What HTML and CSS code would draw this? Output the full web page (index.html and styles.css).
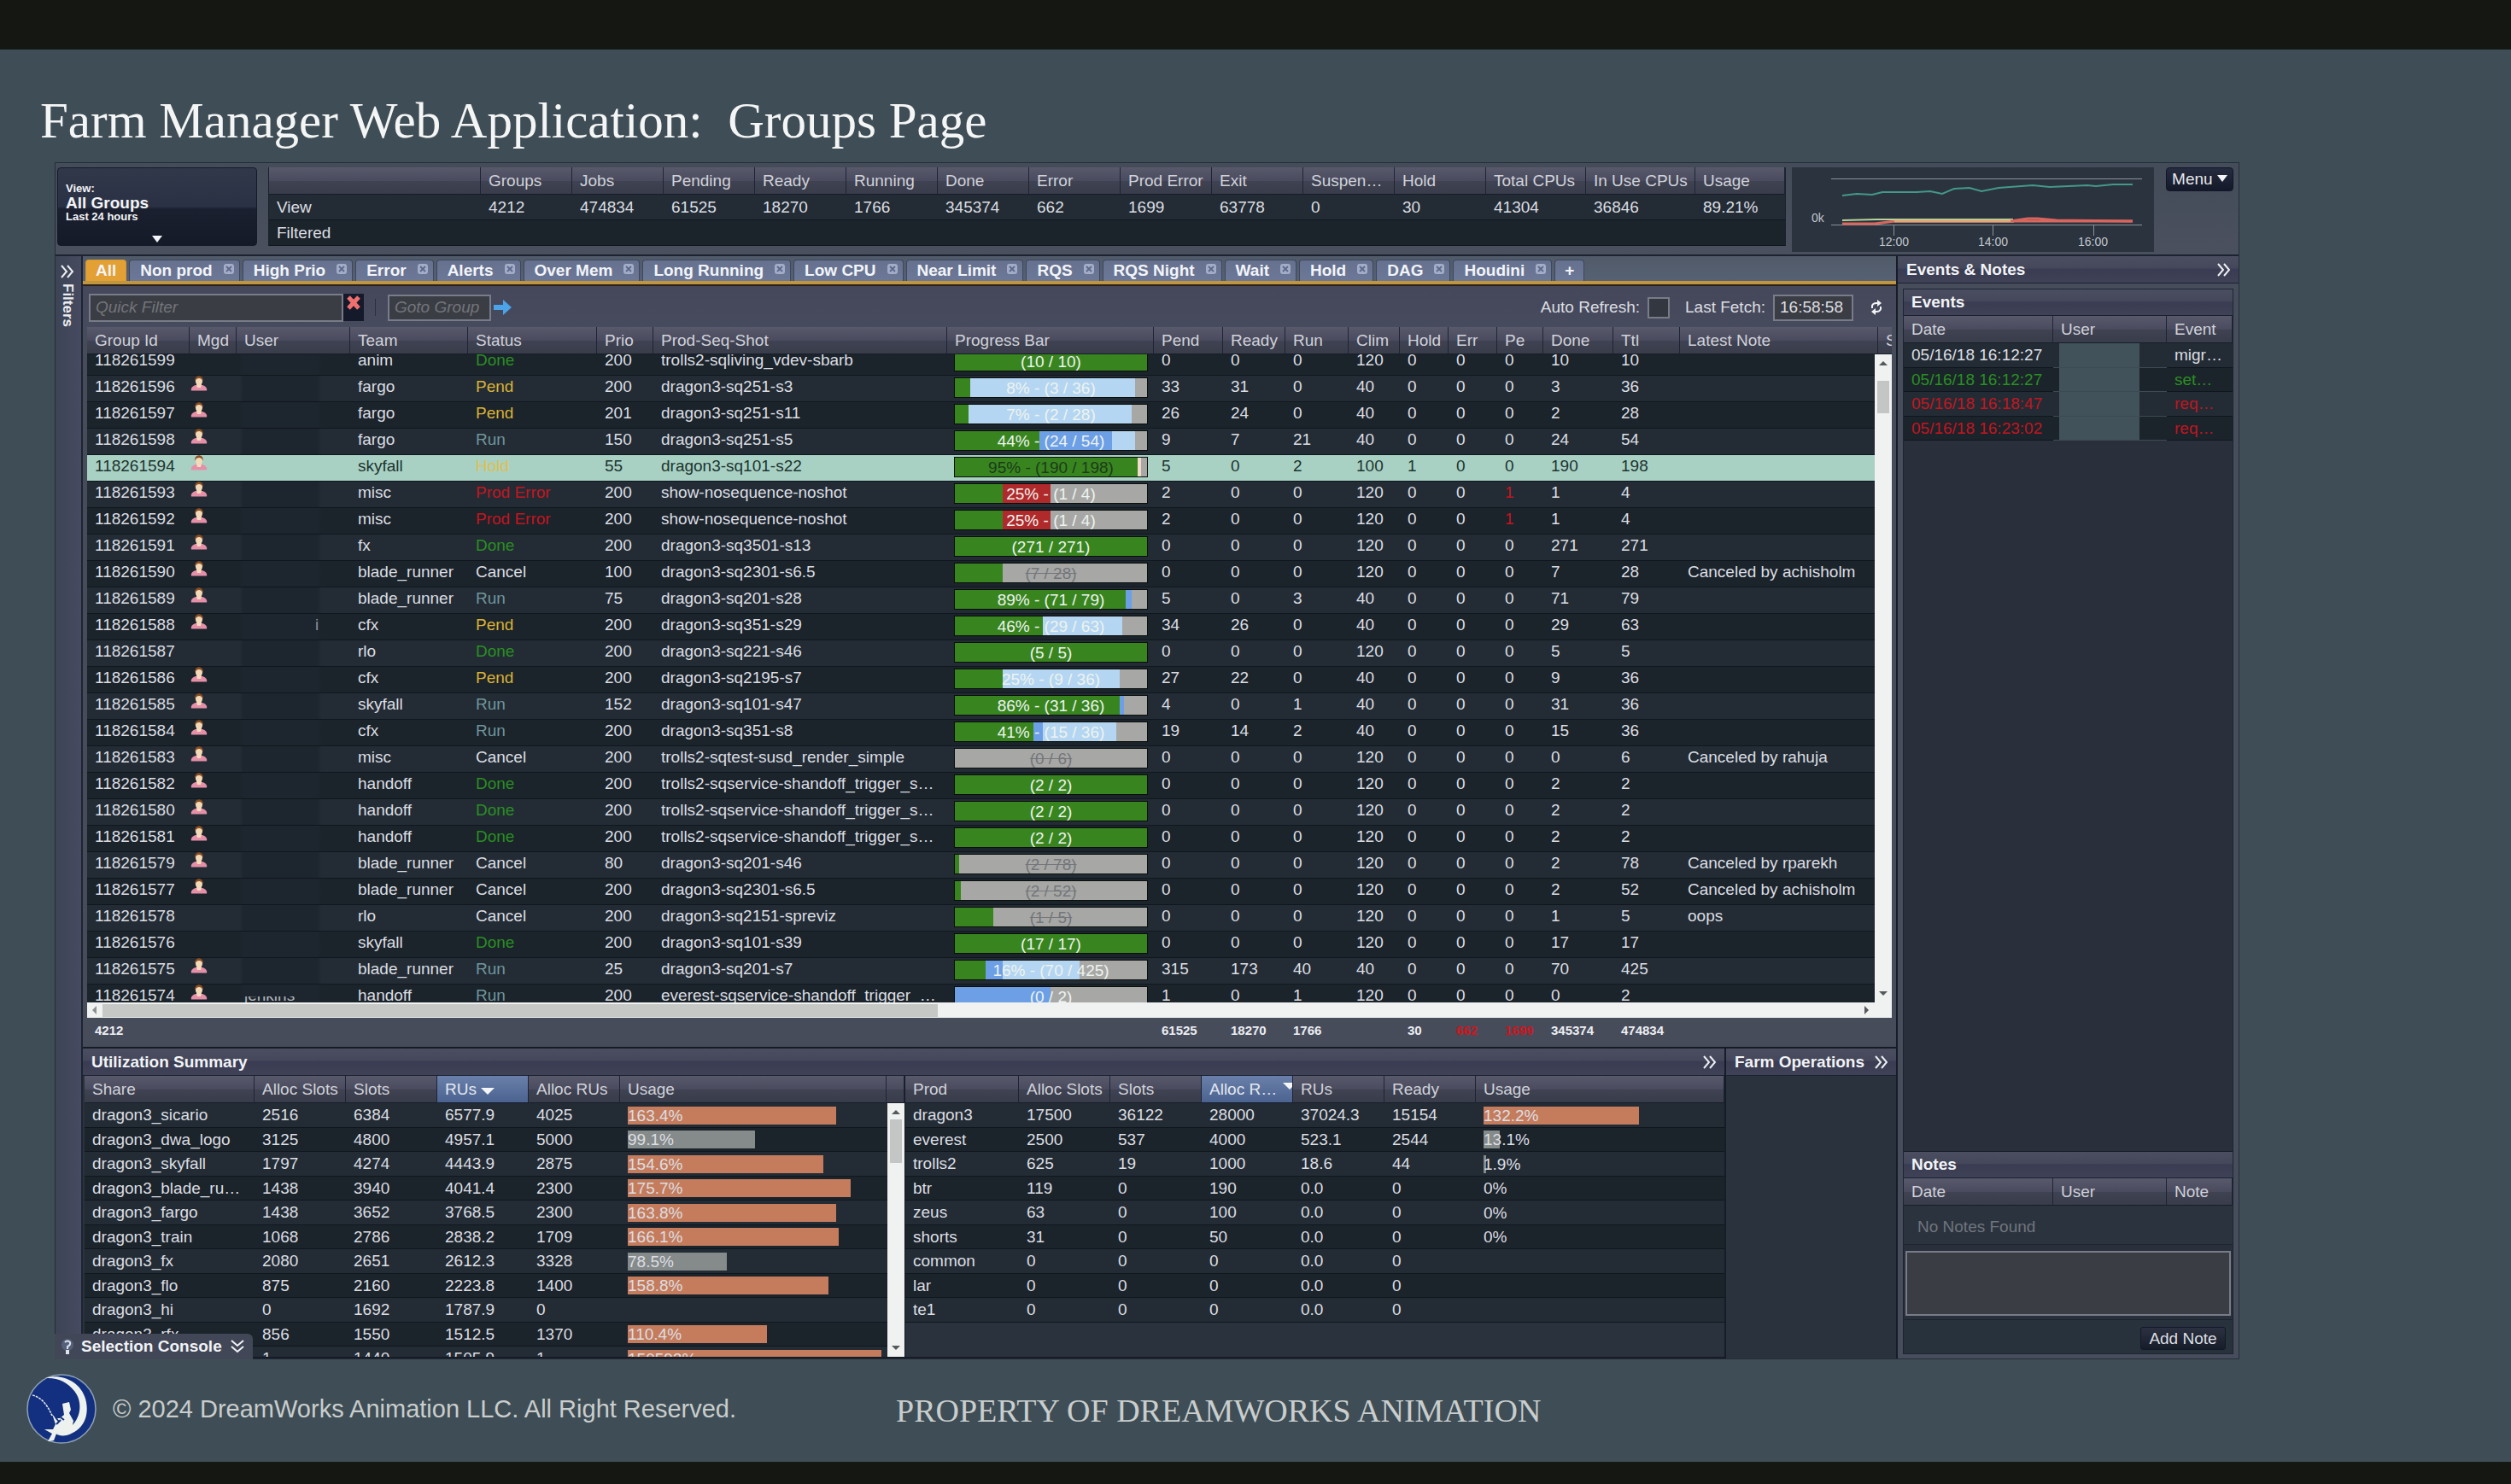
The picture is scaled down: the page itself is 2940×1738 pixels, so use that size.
FILE: index.html
```html
<!DOCTYPE html>
<html lang="en">
<head>
<meta charset="utf-8">
<title>Farm Manager - Groups</title>
<link rel="stylesheet" href="styles.css">
</head>
<body>
<svg class="defs" aria-hidden="true">
  <symbol id="chevrons" viewBox="0 0 18 16"><path d="M2 1l6 7-6 7M9 1l6 7-6 7" fill="none" stroke="currentColor" stroke-width="2"/></symbol>
  <symbol id="close" viewBox="0 0 14 14"><rect x="1" y="1" width="12" height="12" rx="3" fill="#a3adc8"/><path d="M4 4l6 6M10 4l-6 6" stroke="#5d6a8c" stroke-width="2"/></symbol>
  <symbol id="person" viewBox="0 0 20 18"><path d="M1 17.500c-1-3 1.500-5.500 5-6.500h8c3.500 1 6 3.500 5 6.500z" fill="#e58fa8"/><path d="M7 10h6l-1 4h-4z" fill="#f6dcc0"/><ellipse cx="10" cy="6.500" rx="4" ry="5" fill="#f3d9b8"/><path d="M5 7c-.5-9 10.500-9 10 0-1-3-3-4-5-4s-4 1-5 4z" fill="#8a4f22"/></symbol>
</svg>
<main class="slide">
  <h1 class="slide-title">Farm Manager Web Application:&nbsp; Groups Page</h1>

  <section class="app">
    <header class="top">
      <button class="view-select" type="button">
        <span class="view-label">View:</span>
        <span class="view-name">All Groups</span>
        <span class="view-range">Last 24 hours</span>
        <span class="caret"></span>
      </button>
      <div class="summary">
        <table class="table">
          <colgroup><col class="w248"><col class="w107" span="11"><col class="w117"><col class="w128"><col></colgroup>
          <thead><tr><th></th><th>Groups</th><th>Jobs</th><th>Pending</th><th>Ready</th><th>Running</th><th>Done</th><th>Error</th><th>Prod Error</th><th>Exit</th><th>Suspen…</th><th>Hold</th><th>Total CPUs</th><th>In Use CPUs</th><th>Usage</th></tr></thead>
          <tbody>
            <tr><td>View</td><td>4212</td><td>474834</td><td>61525</td><td>18270</td><td>1766</td><td>345374</td><td>662</td><td>1699</td><td>63778</td><td>0</td><td>30</td><td>41304</td><td>36846</td><td>89.21%</td></tr>
            <tr><td>Filtered</td><td></td><td></td><td></td><td></td><td></td><td></td><td></td><td></td><td></td><td></td><td></td><td></td><td></td><td></td></tr>
          </tbody>
        </table>
      </div>
      <svg class="chart" viewBox="0 0 424 99" role="img" aria-label="Farm load">
        <path d="M46 13.500H410M46 67.500H410M119.500 68v12M235.500 68v12M353.500 68v12" stroke="#8b919a" fill="none"/>
        <path d="M59 33l17-2 18 1 12-3h40l16-1 14 3 14-6 18-1 14 4 20-4 40-3 20 2 44-2 10 1 20-2h23" stroke="#45988b" stroke-width="2" fill="none"/>
        <path d="M59 66h38l24-3h278" stroke="#d9695f" stroke-width="3" fill="none"/>
        <path d="M59 62l40-1h160" stroke="#b7d59a" stroke-width="2" fill="none"/>
        <path d="M120 63h140" stroke="#e0a878" stroke-width="3" fill="none"/>
        <path d="M256 63l20-3h12l22 2 89 1" stroke="#d9655f" stroke-width="3" fill="none"/>
        <text x="23" y="64">0k</text><text x="102" y="92">12:00</text><text x="218" y="92">14:00</text><text x="335" y="92">16:00</text>
      </svg>
      <button class="menu-btn" type="button">Menu <span class="caret"></span></button>
    </header>

    <div class="middle">
      <aside class="filters">
        <button class="icon-btn" type="button" aria-label="Expand filters"><svg class="chev"><use href="#chevrons"/></svg></button>
        <span class="filters-label">Filters</span>
      </aside>

      <div class="center">
        <nav class="tabs" id="tabs"></nav>

        <div class="toolbar">
          <input class="field quick" type="text" placeholder="Quick Filter" aria-label="Quick Filter">
          <button class="clear-btn" type="button" aria-label="Clear filter"><svg viewBox="0 0 18 18"><path d="M3 2l12 13M15 2L3 15" stroke="#f07070" stroke-width="5"/></svg></button>
          <span class="rule"></span>
          <input class="field goto" type="text" placeholder="Goto Group" aria-label="Goto Group">
          <button class="icon-btn go" type="button" aria-label="Go"><svg viewBox="0 0 21 18"><path d="M0 6h11V0l10 9-10 9v-6H0z" fill="#4ba3e8"/></svg></button>
          <label class="auto" for="auto">Auto Refresh:</label>
          <input class="check" id="auto" type="checkbox">
          <label class="fetch-label" for="fetch">Last Fetch:</label>
          <input class="field fetch" id="fetch" type="text" value="16:58:58" readonly>
          <button class="icon-btn refresh" type="button" aria-label="Refresh"><svg viewBox="0 0 14 18"><path d="M2 10V7q1-3 5-3h3M12 8v3q-1 3-5 3H4" fill="none" stroke="#f2f3f5" stroke-width="2"/><path d="M8 0l5 4-5 4zM6 10l-5 4 5 4z" fill="#f2f3f5"/></svg></button>
        </div>

        <div class="grid-wrap">
          <table class="table groups">
            <colgroup class="grid-cols"></colgroup>
            <thead><tr><th>Group Id</th><th>Mgd</th><th>User</th><th>Team</th><th>Status</th><th>Prio</th><th>Prod-Seq-Shot</th><th>Progress Bar</th><th>Pend</th><th>Ready</th><th>Run</th><th>Clim</th><th>Hold</th><th>Err</th><th>Pe</th><th>Done</th><th>Ttl</th><th>Latest Note</th><th class="cut">S</th></tr></thead>
          </table>
          <div class="scroll-row">
            <div class="viewport">
              <table class="table groups body"><colgroup class="grid-cols"></colgroup><tbody id="groups"></tbody></table>
            </div>
            <div class="vbar"><span class="up"></span><span class="thumb"></span><span class="down"></span></div>
          </div>
          <div class="hbar"><span class="left"></span><span class="thumb"></span><span class="right"></span></div>
          <table class="table groups totals">
            <colgroup class="grid-cols"></colgroup>
            <tbody><tr><td>4212</td><td></td><td></td><td></td><td></td><td></td><td></td><td></td><td>61525</td><td>18270</td><td>1766</td><td></td><td>30</td><td class="bad">662</td><td class="bad">1699</td><td>345374</td><td>474834</td><td></td><td></td></tr></tbody>
          </table>
        </div>

        <div class="bottom">
          <section class="util">
            <h2 class="panel-title">Utilization Summary <button class="icon-btn" type="button" aria-label="Collapse"><svg class="chev"><use href="#chevrons"/></svg></button></h2>
            <div class="util-tables">
              <div class="shares">
                <table class="table small">
                  <colgroup><col class="w199"><col class="w107" span="4"><col><col class="w21"></colgroup>
                  <thead><tr><th>Share</th><th>Alloc Slots</th><th>Slots</th><th class="sorted">RUs <span class="caret"></span></th><th>Alloc RUs</th><th>Usage</th><th></th></tr></thead>
                </table>
                <div class="scroll-row">
                  <div class="viewport">
                    <table class="table small"><colgroup><col class="w199"><col class="w107" span="4"><col></colgroup><tbody id="shares"></tbody></table>
                  </div>
                  <div class="vbar short"><span class="up"></span><span class="thumb"></span><span class="down"></span></div>
                </div>
              </div>
              <div class="prods">
                <table class="table small">
                  <colgroup><col class="w133"><col class="w107" span="5"><col></colgroup>
                  <thead><tr><th>Prod</th><th>Alloc Slots</th><th>Slots</th><th class="sorted cut-sort"><div class="sort-cell"><span>Alloc R…</span><span class="caret"></span></div></th><th>RUs</th><th>Ready</th><th>Usage</th></tr></thead>
                  <tbody id="prods"></tbody>
                </table>
              </div>
            </div>
          </section>
          <section class="ops">
            <h2 class="panel-title">Farm Operations <button class="icon-btn" type="button" aria-label="Collapse"><svg class="chev"><use href="#chevrons"/></svg></button></h2>
          </section>
        </div>
      </div>

      <aside class="side">
        <h2 class="panel-title">Events &amp; Notes <button class="icon-btn" type="button" aria-label="Collapse"><svg class="chev"><use href="#chevrons"/></svg></button></h2>
        <div class="side-body">
          <section class="events">
            <h3 class="panel-title">Events</h3>
            <table class="table small">
              <colgroup><col class="w175"><col class="w133"><col></colgroup>
              <thead><tr><th>Date</th><th>User</th><th>Event</th></tr></thead>
              <tbody>
                <tr><td>05/16/18 16:12:27</td><td class="masked"></td><td>migr…</td></tr>
                <tr class="good"><td>05/16/18 16:12:27</td><td class="masked"></td><td>set…</td></tr>
                <tr class="bad"><td>05/16/18 16:18:47</td><td class="masked"></td><td>req…</td></tr>
                <tr class="bad"><td>05/16/18 16:23:02</td><td class="masked"></td><td>req…</td></tr>
              </tbody>
            </table>
          </section>
          <section class="notes">
            <h3 class="panel-title">Notes</h3>
            <table class="table small">
              <colgroup><col class="w175"><col class="w133"><col></colgroup>
              <thead><tr><th>Date</th><th>User</th><th>Note</th></tr></thead>
            </table>
            <p class="empty">No Notes Found</p>
            <textarea class="field note-text" aria-label="Note text"></textarea>
            <div class="note-actions"><button class="add-note" type="button">Add Note</button></div>
          </section>
        </div>
      </aside>
    </div>

    <button class="console" type="button">
      <svg class="console-icon" viewBox="0 0 16 18"><circle cx="9" cy="7" r="7" fill="#55607c"/><path d="M6 4q3-3 6 0 1 3-3 5v3M8 14h2v3H8z" fill="none" stroke="#dfe3ec" stroke-width="2"/></svg>
      Selection Console
      <svg class="chev turned"><use href="#chevrons"/></svg>
    </button>
  </section>

  <footer class="slide-foot">
    <svg class="logo" viewBox="0 0 84 84" role="img" aria-label="DreamWorks">
      <circle cx="42" cy="42" r="40" fill="#12307f" stroke="#8fa0b4" stroke-width="1.500"/>
      <path d="M23 6C42 0 64 10 70 30c6 22-4 38-22 43-6 1-10 0-15-3 9 1 16-2 21-8 12-12 12-30 3-41C49 11 38 5 23 6z" fill="#eef2ee"/>
      <path d="M8 26q14 3 23 24" fill="none" stroke="#e6ebf0" stroke-width="1.500" stroke-dasharray="3 1"/>
      <path d="M43 36l8-2 2 9-2 4 5 9-2 10-11 4-7 1-3 8-7 1 5-9-9-5 10 0 3-6-4-12 4 5 5 0 5-4z" fill="#eef2ee"/>
      <path d="M35 52l4 5M41 52l4 3M36 60l5-5" stroke="#12307f" stroke-width="2"/>
    </svg>
    <p class="copyright">© 2024 DreamWorks Animation LLC. All Right Reserved.</p>
    <p class="property">PROPERTY OF DREAMWORKS ANIMATION</p>
  </footer>
</main>
<script src="app.js"></script>
</body>
</html>
```
FILE: styles.css
```css
* { box-sizing: border-box; }

body {
  margin: 0;
  background: #40505a;
  color: #dcdee2;
  font: 19px/26px "Liberation Sans", Arial, sans-serif;
}

h1, h2, h3, p { margin: 0; }

button, input, textarea { font: inherit; color: inherit; }
button { padding: 0; border: 0; background: none; }

.defs { position: absolute; width: 0; height: 0; }

.slide {
  display: flex;
  flex-direction: column;
  height: 100vh;
  border-top: 58px solid #151812;
  border-bottom: 26px solid #151812;
  background: #3f4e56;
}

.slide-title {
  padding: 50px 0 16px 47px;
  color: #f4f5f5;
  font: 59px/66px "Liberation Serif", "Times New Roman", serif;
}

/* application frame */
.app {
  position: relative;
  flex: 1;
  display: flex;
  flex-direction: column;
  min-height: 0;
  margin: 0 318px 0 64px;
  border: 1px solid #232c39;
  background: #474d5b;
}

.top {
  display: flex;
  align-items: flex-start;
  height: 109px;
  padding: 5px 6px 0 2px;
  border-bottom: 2px solid #1d2431;
  background: linear-gradient(#434c58, #4b505e);
}

.view-select {
  display: flex;
  flex-direction: column;
  align-items: flex-start;
  width: 234px;
  height: 92px;
  margin-right: 13px;
  padding: 16px 9px 4px;
  border: 1px solid #141a2a;
  border-radius: 4px;
  background: linear-gradient(#31384a, #2b3144 50%, #1a202f 53%, #151a28);
  color: #f4f5f7;
  font-weight: bold;
  text-align: left;
}
.view-label, .view-range { font-size: 13px; line-height: 16px; }
.view-name { font-size: 19px; line-height: 17px; }
.view-select .caret { align-self: center; margin-top: 14px; }

.caret {
  display: inline-block;
  border: 6px solid transparent;
  border-top: 8px solid #f4f5f7;
  border-bottom: 0;
}

/* data tables */
.table {
  width: 100%;
  table-layout: fixed;
  border-spacing: 0;
}
.table th, .table td {
  padding: 0 5px 0 9px;
  overflow: hidden;
  text-align: left;
  text-overflow: ellipsis;
  white-space: nowrap;
}
.table th {
  height: 32px;
  border-right: 1px solid #1e2436;
  border-bottom: 1px solid #171d2b;
  background: linear-gradient(#585a6c, #4a4b5e 50%, #3f4252 52%, #393d4a);
  color: #d0d2da;
  font-weight: normal;
}
.table td { border-bottom: 1px solid #10161e; }
.table tbody tr { background: #232c35; }
.table tbody tr:nth-child(even) { background: #1b232b; }
.table .cut { padding-right: 0; border-right: 0; text-overflow: clip; }
.table .sorted { background: linear-gradient(#6a80aa, #4b6390); color: #e3e7ef; }
.table .sorted .caret { border-width: 8px 8px 0; }
.table .cut-sort { padding-right: 0; }
.sort-cell { display: flex; justify-content: space-between; }
.table .sort-cell .caret { flex: none; margin: 5px -5px 0 0; }

.w21 { width: 21px; }
.w107 { width: 107px; }
.w117 { width: 117px; }
.w128 { width: 128px; }
.w133 { width: 133px; }
.w175 { width: 175px; }
.w199 { width: 199px; }
.w248 { width: 248px; }

.summary { flex: 1; min-width: 0; margin-right: 7px; border: 1px solid #1b2130; border-width: 0 1px; }
.summary .table td { height: 30px; }

.chart { width: 424px; height: 99px; margin-right: 14px; background: #2a333e; }
.chart text { fill: #c3c7cd; font-size: 14px; }

.menu-btn {
  width: 79px;
  height: 28px;
  border: 1px solid #10162a;
  border-radius: 4px;
  background: linear-gradient(#262c3f, #141929);
  color: #e6e8ec;
}
.menu-btn .caret { vertical-align: 3px; }

/* body of the frame */
.middle { flex: 1; display: flex; min-height: 0; }

.icon-btn { display: flex; align-items: center; color: #eceef2; }
.chev { display: block; width: 18px; height: 16px; }
.chev.turned { transform: rotate(90deg); }

.filters {
  display: flex;
  flex-direction: column;
  align-items: center;
  gap: 6px;
  width: 32px;
  padding: 10px 2px 0 0;
  border-right: 2px solid #1d2432;
  background: linear-gradient(90deg, #3c4455, #474a60);
}
.filters-label { writing-mode: vertical-rl; color: #eceef2; font-size: 17px; font-weight: bold; line-height: 18px; }

.center { flex: 1; display: flex; flex-direction: column; min-width: 0; border-right: 2px solid #161c28; }

.tabs {
  display: flex;
  gap: 3px;
  padding: 4px 3px 0;
  border-bottom: 4px solid #c0953f;
  background: linear-gradient(#505a68, #566174);
}
.tab {
  display: flex;
  align-items: center;
  gap: 12px;
  height: 25px;
  padding: 0 5px 0 12px;
  border: 1px solid #3d475e;
  border-bottom: 0;
  border-radius: 4px 4px 0 0;
  background: linear-gradient(#66718f, #6c7897);
  color: #f2f4f8;
  font-weight: bold;
}
.tab svg { width: 14px; height: 14px; margin-bottom: 4px; }
.tab.plain { padding: 0 11px; }
.tab.active { border-color: #d8962c; background: #e3a035; }

.toolbar {
  display: flex;
  align-items: center;
  height: 50px;
  padding: 2px 10px 0 7px;
  border-top: 2px solid #2b2118;
  background: linear-gradient(#45475a, #474b5e);
}
.field {
  border: 2px solid #777c88;
  border-radius: 0;
  background: #3b3d44;
  outline: 0;
}
.field::placeholder { color: #72757a; font-style: italic; opacity: 1; }
.quick { width: 298px; height: 33px; padding: 0 6px; }
.clear-btn { width: 24px; height: 32px; background: #151a2a; }
.clear-btn svg { display: block; width: 18px; height: 18px; margin: 0 3px 10px; }
.rule { width: 1px; height: 20px; margin: 0 14px 0 13px; background: #2a3042; }
.goto { width: 121px; height: 31px; padding: 0 6px; }
.go { width: 21px; height: 18px; margin-left: 3px; }
.auto { margin-left: auto; }
.check { appearance: none; width: 26px; height: 25px; margin: 0 18px 0 9px; border: 2px solid #777c88; background: #33373f; }
.fetch-label { margin-right: 9px; }
.fetch { width: 94px; height: 31px; padding: 0 6px; }
.refresh { width: 14px; height: 18px; margin: 0 6px 0 20px; }

/* groups grid */
.grid-wrap { flex: 1; display: flex; flex-direction: column; min-height: 0; padding: 0 5px; background: #474c5b; }
.groups { flex: none; }
.groups td { height: 31px; padding-bottom: 4px; }
.groups td.icon { padding: 0 0 0 1px; vertical-align: top; }
.groups td.icon svg { display: block; width: 20px; height: 18px; }
.groups td.user { padding: 0 5px 4px 9px; background: linear-gradient(90deg, transparent 4px, #1d252e 8px, #1d252e 94px, transparent 100px); }
.groups td.bar { padding: 0 7px 2px 8px; }
.body { margin-top: -6px; }
.body tbody tr:nth-child(odd) { background: #1b232b; }
.body tbody tr:nth-child(even) { background: #232c35; }
.body tbody tr.selected { background: #a8d1c4; color: #20342f; }
.body tbody tr.selected td.user { background: none; }
.body tbody tr.selected .progress { color: #1d3b1b; }
.residue { display: block; clip-path: inset(14px 0 0); color: #b4b8bd; }
.stray { display: block; padding-left: 83px; color: #8d9298; }

.scroll-row { flex: 1; display: flex; min-height: 0; overflow: hidden; }
.viewport { flex: 1; min-width: 0; overflow: hidden; }
.grid-wrap .viewport .groups { width: calc(100% + 20px); }

.Done, .good { color: #2a8f22; }
.Pend { color: #d9b236; }
.Run { color: #6f969c; }
.Hold { color: #e0bf50; }
.Error, .bad { color: #c3151f; }

.progress {
  height: 24px;
  border: 1px solid #0a0f0a;
  color: #eef3ee;
  line-height: 23px;
  text-align: center;
}
.progress.cancel { color: #74767a; text-decoration: line-through; }

.vbar, .hbar { background: #f0f2f1; }
.vbar { display: flex; flex-direction: column; align-items: center; width: 20px; padding: 8px 0; }
.vbar .thumb { width: 14px; height: 38px; margin-top: 18px; background: #c4c6c6; }
.vbar.short .thumb { height: 51px; margin-top: 6px; }
.hbar { display: flex; align-items: center; flex: none; height: 18px; padding: 0 27px 0 6px; }
.hbar .thumb { width: 47%; height: 15px; margin-left: 7px; background: #c6c8c6; }
.up, .down, .left, .right { border: 5px solid transparent; }
.up { border-top: 0; border-bottom-color: #55595c; }
.down { border-bottom: 0; border-top-color: #55595c; margin-top: auto; }
.left { border-left: 0; border-right-color: #8c9092; }
.right { border-right: 0; border-left-color: #55595c; margin-left: auto; }

.groups.totals { font-size: 15px; font-weight: bold; }
.groups.totals tr { background: none; }
.groups.totals td { height: 34px; padding-right: 0; border: 0; color: #eceef2; overflow: visible; }
.groups.totals td.bad { color: #d0141c; }

/* lower panels */
.bottom { display: flex; flex: none; height: 365px; border-top: 2px solid #161c26; background: #2a333d; }
.panel-title {
  display: flex;
  align-items: center;
  justify-content: space-between;
  flex: none;
  height: 32px;
  padding: 0 8px 0 10px;
  border-bottom: 1px solid #1a2030;
  background: linear-gradient(#4b4e60, #45485b 45%, #393c52 50%, #404357);
  color: #f2f3f6;
  font-size: 19px;
  font-weight: bold;
}
.util { flex: 1; display: flex; flex-direction: column; min-width: 0; border-right: 2px solid #161c28; }
.ops { width: 199px; }
.util-tables { flex: 1; display: flex; min-height: 0; padding-left: 2px; border-bottom: 2px solid #161c26; }
.shares { display: flex; flex-direction: column; width: 50%; }
.prods { flex: 1; min-width: 0; border-left: 1px solid #141a24; }
.small td { height: 28px; }
.small tbody tr:nth-child(odd) td { height: 29px; }
.small td.usage { padding-right: 7px; }
#shares td:first-child { padding-right: 12px; }
.meter { display: block; height: 21px; background: #858a8a; line-height: 21px; }
.meter.over { background: #c47c5c; }

/* events and notes */
.side { display: flex; flex-direction: column; width: 399px; }
.side-body { flex: 1; display: flex; flex-direction: column; margin: 6px 6px 5px; border: 1px solid #1c2432; background: #2a303b; }
.events { flex: 1; }
.side-body .panel-title { height: 31px; padding-left: 9px; }
.table td.masked { background: linear-gradient(#42525a, #42525a) 7px 0 / 94px 100% no-repeat; border-bottom-color: #3c4a53; }
.notes { border-top: 1px solid #161c28; }
.notes .empty { height: 46px; padding: 12px 0 0 16px; border-bottom: 1px solid #1e2632; color: #70757d; background: #2b343e; }
.note-text { display: block; width: calc(100% - 4px); height: 76px; margin: 7px 2px 4px; resize: none; }
.note-actions { display: flex; justify-content: flex-end; padding: 8px 8px 4px; border-top: 1px solid #1c2430; background: #28323c; }
.add-note {
  width: 100px;
  height: 27px;
  border: 1px solid #12182a;
  border-radius: 3px;
  background: linear-gradient(#2b3140, #161c28);
}

.console {
  position: absolute;
  left: -1px;
  bottom: -1px;
  display: flex;
  align-items: center;
  gap: 9px;
  height: 30px;
  padding: 0 9px 0 6px;
  border-radius: 0 6px 0 0;
  background: #414756;
  color: #f2f3f6;
  font-weight: bold;
}
.console-icon { width: 16px; height: 18px; }

/* slide footer */
.slide-foot { display: flex; align-items: center; flex: none; height: 120px; padding-left: 30px; color: #c9cdcd; }
.logo { width: 84px; height: 84px; margin: 0 18px 4px 0; }
.copyright { width: 917px; margin-bottom: 4px; font-size: 29px; line-height: 32px; }
.property { font: 38px/44px "Liberation Serif", "Times New Roman", serif; }
```
FILE: app.js
```js
const columnWidths = [120, 55, 133, 138, 151, 66, 344, 242, 81, 73, 74, 60, 57, 57, 54, 82, 78, 0, 16];
document.querySelectorAll('.grid-cols').forEach(group => {
  group.innerHTML = columnWidths.map(w => w ? `<col style="width:${w}px">` : '<col>').join('');
});

const tabs = ['Non prod', 'High Prio', 'Error', 'Alerts', 'Over Mem', 'Long Running', 'Low CPU', 'Near Limit', 'RQS', 'RQS Night', 'Wait', 'Hold', 'DAG', 'Houdini'];
document.getElementById('tabs').innerHTML =
  '<button class="tab plain active" type="button">All</button>' +
  tabs.map(t => `<button class="tab" type="button">${t}<svg><use href="#close"/></svg></button>`).join('') +
  '<button class="tab plain" type="button">+</button>';

const colors = { g: '#38851f', b: '#6c9fe6', l: '#b4d6f2', r: '#b02a2c', h: '#f0dcc8', x: '#a7a8a6' };

// id | managed | team | status | prio | shot | segments (colour + end %) | label | pend ready run clim hold err pe done ttl | note
const groups = `118261599|0|anim|Done|200|trolls2-sqliving_vdev-sbarb|g100|(10 / 10)|0 0 0 120 0 0 0 10 10|
118261596|1|fargo|Pend|200|dragon3-sq251-s3|g8 l94|8% - (3 / 36)|33 31 0 40 0 0 0 3 36|
118261597|1|fargo|Pend|201|dragon3-sq251-s11|g7 l92|7% - (2 / 28)|26 24 0 40 0 0 0 2 28|
118261598|1|fargo|Run|150|dragon3-sq251-s5|g44 b82 l94|44% - (24 / 54)|9 7 21 40 0 0 0 24 54|
118261594|1|skyfall|Hold|55|dragon3-sq101-s22|g95 h97|95% - (190 / 198)|5 0 2 100 1 0 0 190 198|
118261593|1|misc|Prod Error|200|show-nosequence-noshot|g25 r50|25% - (1 / 4)|2 0 0 120 0 0 1 1 4|
118261592|1|misc|Prod Error|200|show-nosequence-noshot|g25 r50|25% - (1 / 4)|2 0 0 120 0 0 1 1 4|
118261591|1|fx|Done|200|dragon3-sq3501-s13|g100|(271 / 271)|0 0 0 120 0 0 0 271 271|
118261590|1|blade_runner|Cancel|100|dragon3-sq2301-s6.5|g25|(7 / 28)|0 0 0 120 0 0 0 7 28|Canceled by achisholm
118261589|1|blade_runner|Run|75|dragon3-sq201-s28|g89 b92|89% - (71 / 79)|5 0 3 40 0 0 0 71 79|
118261588|1|cfx|Pend|200|dragon3-sq351-s29|g46 l87|46% - (29 / 63)|34 26 0 40 0 0 0 29 63|
118261587|0|rlo|Done|200|dragon3-sq221-s46|g100|(5 / 5)|0 0 0 120 0 0 0 5 5|
118261586|1|cfx|Pend|200|dragon3-sq2195-s7|g25 l86|25% - (9 / 36)|27 22 0 40 0 0 0 9 36|
118261585|1|skyfall|Run|152|dragon3-sq101-s47|g86 b88|86% - (31 / 36)|4 0 1 40 0 0 0 31 36|
118261584|1|cfx|Run|200|dragon3-sq351-s8|g41 b46 l84|41% - (15 / 36)|19 14 2 40 0 0 0 15 36|
118261583|1|misc|Cancel|200|trolls2-sqtest-susd_render_simple|x100|(0 / 6)|0 0 0 120 0 0 0 0 6|Canceled by rahuja
118261582|1|handoff|Done|200|trolls2-sqservice-shandoff_trigger_s…|g100|(2 / 2)|0 0 0 120 0 0 0 2 2|
118261580|1|handoff|Done|200|trolls2-sqservice-shandoff_trigger_s…|g100|(2 / 2)|0 0 0 120 0 0 0 2 2|
118261581|1|handoff|Done|200|trolls2-sqservice-shandoff_trigger_s…|g100|(2 / 2)|0 0 0 120 0 0 0 2 2|
118261579|1|blade_runner|Cancel|80|dragon3-sq201-s46|g2|(2 / 78)|0 0 0 120 0 0 0 2 78|Canceled by rparekh
118261577|1|blade_runner|Cancel|200|dragon3-sq2301-s6.5|g3|(2 / 52)|0 0 0 120 0 0 0 2 52|Canceled by achisholm
118261578|0|rlo|Cancel|200|dragon3-sq2151-spreviz|g20|(1 / 5)|0 0 0 120 0 0 0 1 5|oops
118261576|0|skyfall|Done|200|dragon3-sq101-s39|g100|(17 / 17)|0 0 0 120 0 0 0 17 17|
118261575|1|blade_runner|Run|25|dragon3-sq201-s7|g16 b25 l65|16% - (70 / 425)|315 173 40 40 0 0 0 70 425|
118261574|1|handoff|Run|200|everest-sqservice-shandoff_trigger_…|b50|(0 / 2)|1 0 1 120 0 0 0 0 2|`;

function barFill(segments) {
  let from = 0;
  const stops = segments.split(' ').map(s => {
    const to = +s.slice(1);
    const stop = `${colors[s[0]]} ${from}% ${to}%`;
    from = to;
    return stop;
  });
  stops.push(`${colors.x} ${from}% 100%`);
  return `linear-gradient(90deg, ${stops.join(', ')})`;
}

const userCell = { 118261588: '<span class="stray">i</span>', 118261574: '<span class="residue">jenkins</span>' };

document.getElementById('groups').innerHTML = groups.split('\n').map(line => {
  const [id, managed, team, status, prio, shot, segments, label, counts, note] = line.split('|');
  const numbers = counts.split(' ').map((n, i) => `<td${i === 6 && n !== '0' ? ' class="bad"' : ''}>${n}</td>`).join('');
  return `<tr${status === 'Hold' ? ' class="selected"' : ''}><td>${id}</td>` +
    `<td class="icon">${managed === '1' ? '<svg><use href="#person"/></svg>' : ''}</td>` +
    `<td class="user">${userCell[id] || ''}</td><td>${team}</td><td class="${status}">${status}</td><td>${prio}</td><td>${shot}</td>` +
    `<td class="bar"><div class="progress${status === 'Cancel' ? ' cancel' : ''}" style="background:${barFill(segments)}">${label}</div></td>` +
    `${numbers}<td>${note}</td><td></td></tr>`;
}).join('');

// name, four figures, usage label, bar length in % of the column
const shares = [
  ['dragon3_sicario', 2516, 6384, '6577.9', 4025, '163.4%', 82],
  ['dragon3_dwa_logo', 3125, 4800, '4957.1', 5000, '99.1%', 50],
  ['dragon3_skyfall', 1797, 4274, '4443.9', 2875, '154.6%', 77],
  ['dragon3_blade_runner', 1438, 3940, '4041.4', 2300, '175.7%', 88],
  ['dragon3_fargo', 1438, 3652, '3768.5', 2300, '163.8%', 82],
  ['dragon3_train', 1068, 2786, '2838.2', 1709, '166.1%', 83],
  ['dragon3_fx', 2080, 2651, '2612.3', 3328, '78.5%', 39],
  ['dragon3_flo', 875, 2160, '2223.8', 1400, '158.8%', 79],
  ['dragon3_hi', 0, 1692, '1787.9', 0, '', 0],
  ['dragon3_rfx', 856, 1550, '1512.5', 1370, '110.4%', 55],
  ['dragon3_cfx', 1, 1440, '1505.9', 1, '150592%', 100]
];
const prods = [
  ['dragon3', 17500, 36122, 28000, '37024.3', 15154, '132.2%', 66],
  ['everest', 2500, 537, 4000, '523.1', 2544, '13.1%', 7],
  ['trolls2', 625, 19, 1000, '18.6', 44, '1.9%', 1],
  ['btr', 119, 0, 190, '0.0', 0, '0%', 0],
  ['zeus', 63, 0, 100, '0.0', 0, '0%', 0],
  ['shorts', 31, 0, 50, '0.0', 0, '0%', 0],
  ['common', 0, 0, 0, '0.0', 0, '', 0],
  ['lar', 0, 0, 0, '0.0', 0, '', 0],
  ['te1', 0, 0, 0, '0.0', 0, '', 0]
];

function usageRows(rows) {
  return rows.map(row => {
    const width = row[row.length - 1];
    const label = row[row.length - 2];
    const over = parseFloat(label) > 100 ? ' over' : '';
    const cells = row.slice(0, -2).map(v => `<td>${v}</td>`).join('');
    return `<tr>${cells}<td class="usage">${label && `<span class="meter${over}" style="width:${width}%">${label}</span>`}</td></tr>`;
  }).join('');
}
document.getElementById('shares').innerHTML = usageRows(shares);
document.getElementById('prods').innerHTML = usageRows(prods);
```
